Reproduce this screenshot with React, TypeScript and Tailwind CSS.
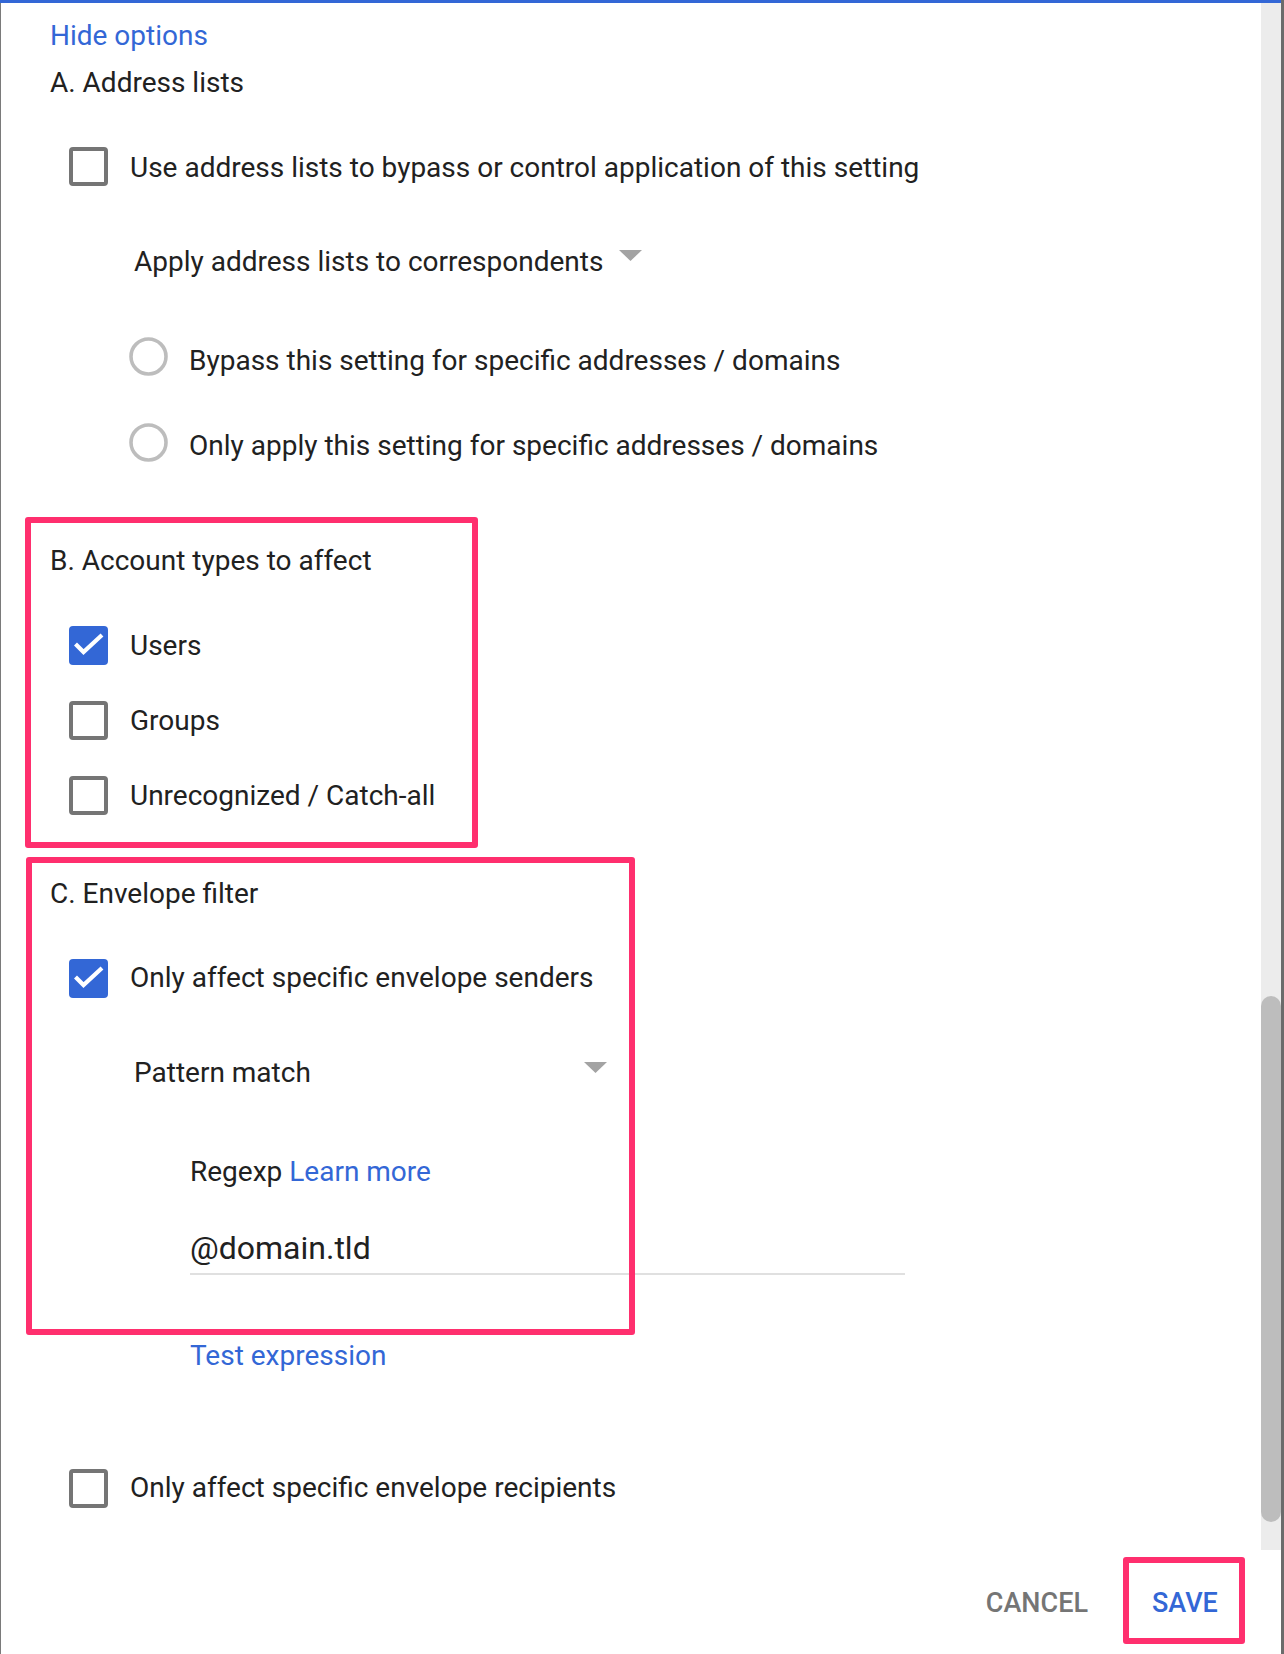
import React from "react";

function Box({ checked }: { checked?: boolean }) {
  if (checked) {
    return (
      <div className="w-[39px] h-[39px] shrink-0 rounded-[4px] bg-[#3367d6] flex items-center justify-center">
        <svg width="39" height="39" viewBox="0 0 39 39">
          <path d="M6.5 18 L14.5 26 L33 9" fill="none" stroke="#ffffff" strokeWidth="4.2" strokeLinecap="butt" strokeLinejoin="miter" />
        </svg>
      </div>
    );
  }
  return <div className="w-[39px] h-[39px] shrink-0 rounded-[4px] border-4 border-[#757575] bg-white" />;
}

function Radio() {
  return (
    <svg width="39" height="39" viewBox="0 0 39 39" className="shrink-0">
      <circle cx="19.5" cy="19.5" r="17.5" fill="none" stroke="#bdbdbd" strokeWidth="3.6" />
    </svg>
  );
}

function Caret() {
  return (
    <svg width="23" height="11" viewBox="0 0 23 11" className="shrink-0">
      <path d="M0 0 L23 0 L11.5 11 Z" fill="#a3a3a3" />
    </svg>
  );
}

function CheckRow({ checked, label, mt, tmt }: { checked?: boolean; label: string; mt: string; tmt: string }) {
  return (
    <div className={`flex items-start gap-[22px] ml-[19px] ${mt}`}>
      <Box checked={checked} />
      <span className={`${tmt} text-[28px] leading-[32px] text-[#212121] whitespace-nowrap`}>{label}</span>
    </div>
  );
}

export default function App() {
  return (
    <div className="flex w-[1284px] h-[1654px] bg-white overflow-hidden font-['Roboto','Noto_Sans',sans-serif]">
      <div className="flex flex-col w-[1281px]">
        <div className="h-[3px] bg-[#3367d6]" />
        <div className="flex h-[1547px]">
          <main className="relative w-[1261px] border-l border-[#7a7a7a] pl-[49px] text-[#212121]">
            <div className="mt-[17px] text-[28px] leading-[32px] text-[#3367d6]">Hide options</div>
            <div className="mt-[15px] text-[28px] leading-[32px]">A. Address lists</div>

            <CheckRow label="Use address lists to bypass or control application of this setting" mt="mt-[48px]" tmt="mt-[5px]" />

            <div className="flex items-start gap-[16px] ml-[84px] mt-[60px]">
              <span className="text-[28px] leading-[32px] whitespace-nowrap">Apply address lists to correspondents</span>
              <div className="mt-[4px]">
                <Caret />
              </div>
            </div>

            <div className="flex items-start gap-[21px] ml-[79px] mt-[59px]">
              <Radio />
              <span className="mt-[8px] text-[28px] leading-[32px] whitespace-nowrap">Bypass this setting for specific addresses / domains</span>
            </div>
            <div className="flex items-start gap-[21px] ml-[79px] mt-[46px]">
              <Radio />
              <span className="mt-[7px] text-[28px] leading-[32px] whitespace-nowrap">Only apply this setting for specific addresses / domains</span>
            </div>

            <div className="mt-[83px] text-[28px] leading-[32px]">B. Account types to affect</div>
            <CheckRow checked label="Users" mt="mt-[49px]" tmt="mt-[4px]" />
            <CheckRow label="Groups" mt="mt-[36px]" tmt="mt-[4px]" />
            <CheckRow label="Unrecognized / Catch-all" mt="mt-[36px]" tmt="mt-[4px]" />

            <div className="mt-[63px] text-[28px] leading-[32px]">C. Envelope filter</div>
            <CheckRow checked label="Only affect specific envelope senders" mt="mt-[49px]" tmt="mt-[3px]" />

            <div className="flex items-start justify-between w-[473px] ml-[84px] mt-[59px]">
              <span className="text-[28px] leading-[32px] whitespace-nowrap">Pattern match</span>
              <div className="mt-[5px]">
                <Caret />
              </div>
            </div>

            <div className="ml-[140px] mt-[67px] text-[28px] leading-[32px] whitespace-nowrap">
              Regexp <span className="text-[#3367d6]">Learn more</span>
            </div>

            <div className="relative z-10 ml-[140px] mt-[41px] w-[715px] pb-[6px] border-b-2 border-[#e0e0e0]">
              <div className="text-[32px] leading-[38px] text-[#212121]">@domain.tld</div>
            </div>

            <div className="ml-[140px] mt-[65px] text-[28px] leading-[32px] text-[#3367d6]">Test expression</div>

            <CheckRow label="Only affect specific envelope recipients" mt="mt-[97px]" tmt="mt-[3px]" />

            <div className="pointer-events-none absolute z-20 left-[24px] top-[514px] w-[453px] h-[331px] border-[6px] border-[#ff2f6e] rounded-[3px]" />
            <div className="pointer-events-none absolute z-20 left-[25px] top-[854px] w-[609px] h-[478px] border-[6px] border-[#ff2f6e] rounded-[3px]" />
          </main>
          <div className="relative w-[20px] bg-[#ececec]">
            <div className="absolute left-0 top-[993px] w-[20px] h-[526px] rounded-full bg-[#bdbdbd]" />
          </div>
        </div>
        <footer className="h-[104px] flex justify-end items-start pt-[7px] pr-[36px] border-l border-[#7a7a7a] bg-white">
          <span className="mt-[30px] mr-[35px] text-[27px] leading-[32px] font-medium text-[#757575]">CANCEL</span>
          <div className="w-[122px] h-[87px] border-[6px] border-[#ff2f6e] rounded-[3px] pt-[24px] pl-[23px]">
            <span className="text-[27px] leading-[32px] font-medium text-[#3367d6]">SAVE</span>
          </div>
        </footer>
      </div>
      <div className="w-[3px] bg-[#6b6b6b]" />
    </div>
  );
}
